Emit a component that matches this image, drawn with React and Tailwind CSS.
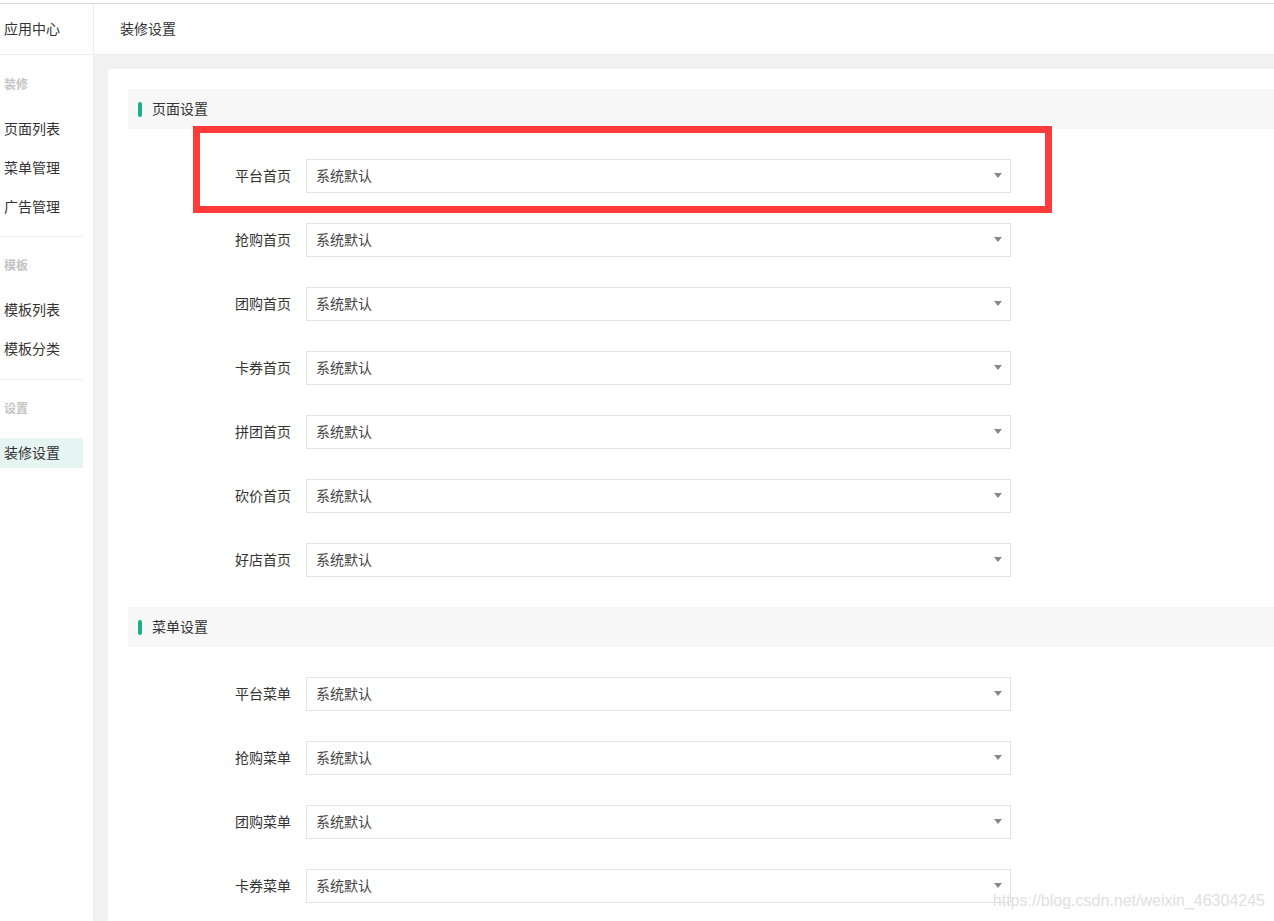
import React from 'react';

const sideGroups = [
  { title: '装修', items: ['页面列表', '菜单管理', '广告管理'] },
  { title: '模板', items: ['模板列表', '模板分类'] },
  { title: '设置', items: ['装修设置'] },
];

const pageRows = ['平台首页', '抢购首页', '团购首页', '卡券首页', '拼团首页', '砍价首页', '好店首页'];
const menuRows = ['平台菜单', '抢购菜单', '团购菜单', '卡券菜单'];

function Select() {
  return (
    <div className="flex h-[34px] w-[705px] items-center justify-between border border-[#e3e3e3] bg-white pb-px pl-[9px] pr-[8px] text-[14px] text-[#444]">
      <span>系统默认</span>
      <svg width="8" height="5" viewBox="0 0 8 5">
        <path d="M0 0h8L4 5z" fill="#888" />
      </svg>
    </div>
  );
}

function FormRow({ label }) {
  return (
    <div className="mt-[30px] flex items-center">
      <div className="w-[163px] pb-[2px] text-right text-[14px] text-[#333]">{label}</div>
      <div className="ml-[15px]">
        <Select />
      </div>
    </div>
  );
}

function SectionHead({ title }) {
  return (
    <div className="flex h-[40px] items-center bg-[#f7f7f7] pl-[10px]">
      <span className="h-[15px] w-[4px] rounded-full bg-[#1bb08b]" />
      <span className="ml-[10px] pb-[2px] text-[14px] text-[#333]">{title}</span>
    </div>
  );
}

function Sidebar() {
  return (
    <aside className="w-[94px] shrink-0 border-r border-[#ececec] bg-white">
      <div className="flex h-[51px] items-center border-b border-[#ececec] pb-[2px] pl-[4px] text-[14px] text-[#333]">
        应用中心
      </div>
      <div className="pr-[10px]">
        {sideGroups.map((g, gi) => (
          <div key={g.title}>
            {gi > 0 && <div className={gi === 1 ? 'mt-[14px] h-px bg-[#eeeeee]' : 'mt-[15px] h-px bg-[#eeeeee]'} />}
            <div className={gi === 0 ? 'mt-[14px] flex h-[30px] items-center pl-[4px] text-[12px] font-bold text-[#c4c4c4]' : 'mt-[13px] flex h-[30px] items-center pl-[4px] text-[12px] font-bold text-[#c4c4c4]'}>
              {g.title}
            </div>
            <div className="mt-[15px] flex flex-col gap-[9px]">
              {g.items.map((it) => (
                <div
                  key={it}
                  className={
                    it === '装修设置'
                      ? 'flex h-[30px] items-center bg-[#e7f5f2] pb-[2px] pl-[4px] text-[14px] text-[#333]'
                      : 'flex h-[30px] items-center pb-[2px] pl-[4px] text-[14px] text-[#333]'
                  }
                >
                  {it}
                </div>
              ))}
            </div>
          </div>
        ))}
      </div>
    </aside>
  );
}

export default function App() {
  return (
    <div
      className="relative h-[921px] w-[1274px] overflow-hidden bg-white"
      style={{ fontFamily: '"Noto Sans CJK SC", "Noto Sans", sans-serif' }}
    >
      <div className="h-[3px] bg-white" />
      <div className="h-px bg-[#d6d6d6]" />
      <div className="flex h-[917px]">
        <Sidebar />
        <main className="flex w-[1180px] shrink-0 flex-col">
          <div className="flex h-[51px] items-center border-b border-[#ececec] bg-white pb-[2px] pl-[26px] text-[14px] text-[#333]">
            装修设置
          </div>
          <div className="flex-1 bg-[#f1f1f1] pl-[14px] pt-[14px]">
            <div className="h-full w-[1200px] bg-white pl-[20px] pt-[20px]">
              <SectionHead title="页面设置" />
              {pageRows.map((r) => (
                <FormRow key={r} label={r} />
              ))}
              <div className="mt-[30px]">
                <SectionHead title="菜单设置" />
              </div>
              {menuRows.map((r) => (
                <FormRow key={r} label={r} />
              ))}
            </div>
          </div>
        </main>
      </div>

      <div className="pointer-events-none absolute left-[193px] top-[126px] h-[87px] w-[859px] border-[7px] border-[#fe3b3b]" />

      <div
        className="pointer-events-none absolute bottom-[8px] right-[9px] text-[16px] text-[#e0e0e0]"
        style={{ fontFamily: '"Liberation Sans", Arial, sans-serif' }}
      >
        https://blog.csdn.net/weixin_46304245
      </div>
    </div>
  );
}
